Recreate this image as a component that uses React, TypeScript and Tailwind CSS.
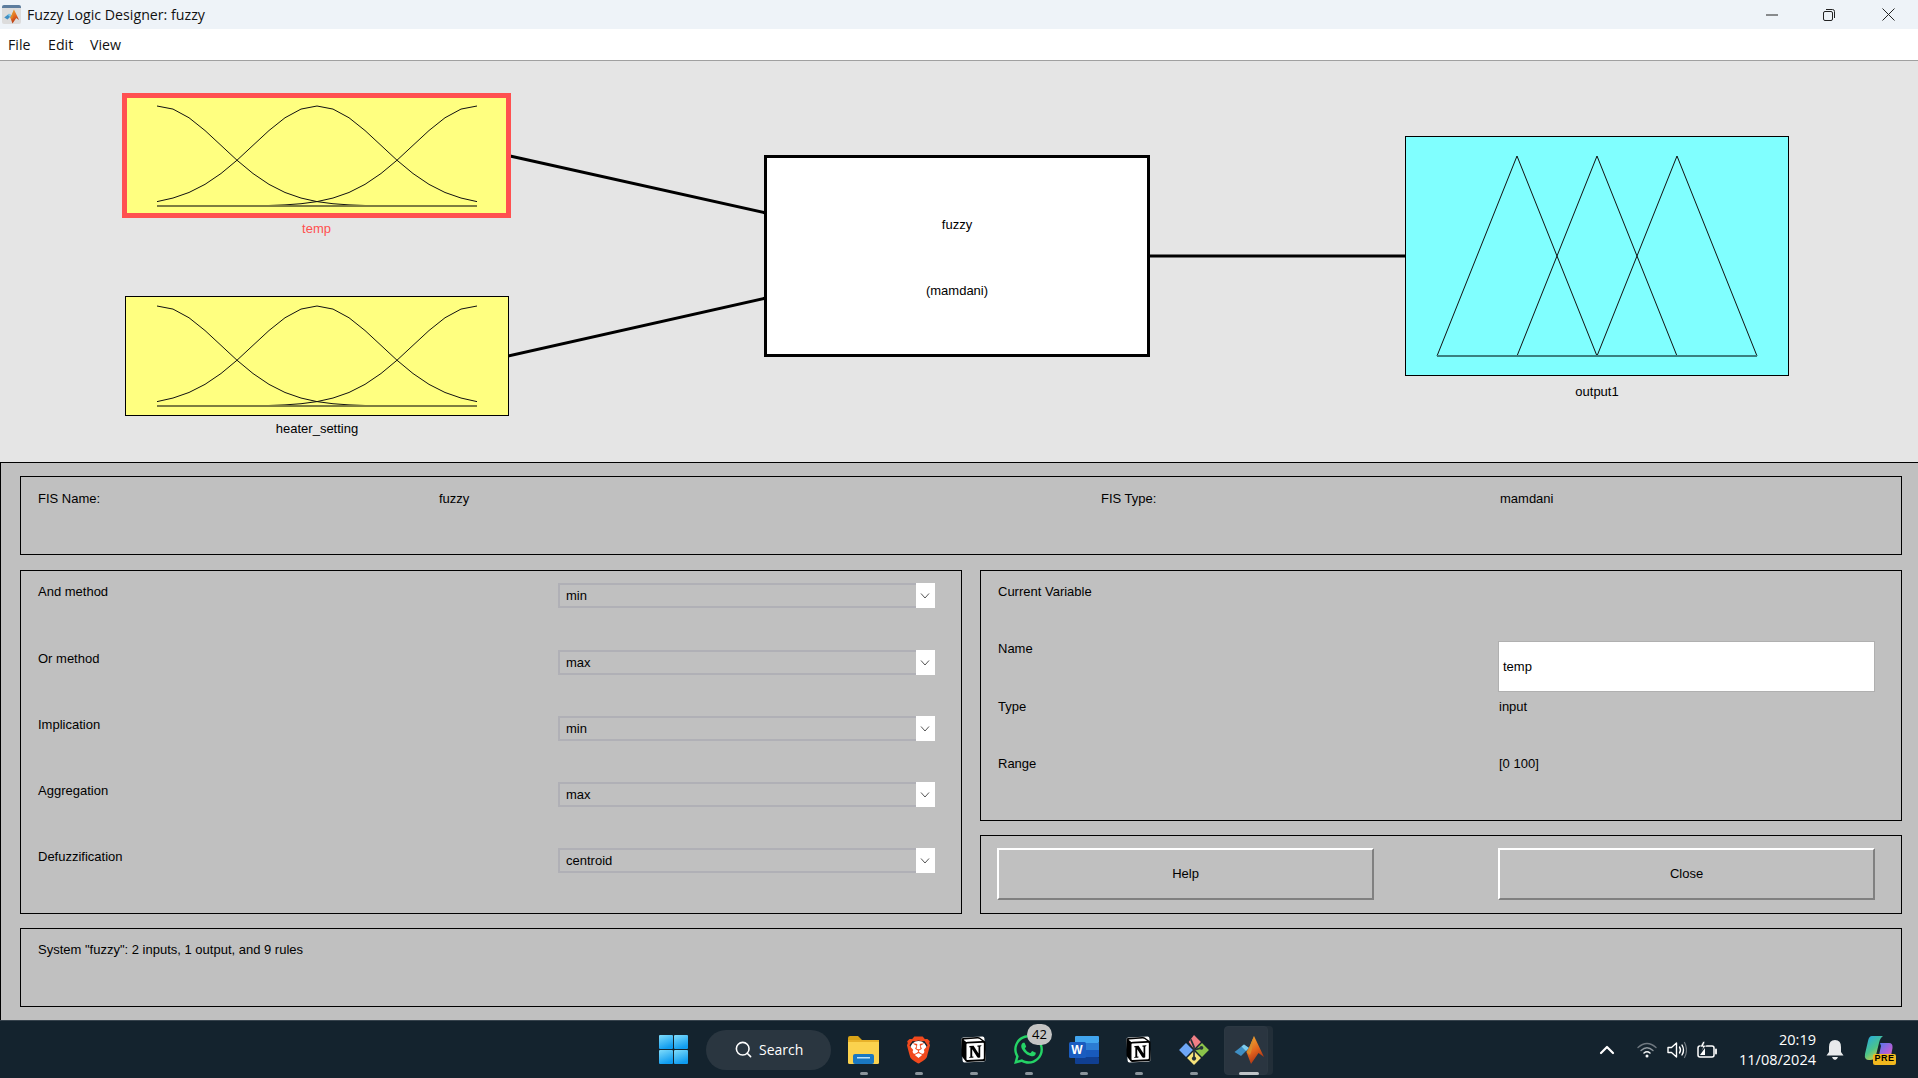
import { ChevronUp, Search } from "lucide-react";
import { FaWhatsapp } from "react-icons/fa";
import { SiBrave, SiNotion } from "react-icons/si";

const labelFont = "font-['Liberation_Sans',Arial,sans-serif] text-[13px] leading-4 text-black";
const uiFont = "font-['Open_Sans','Noto_Sans',sans-serif]";

// MATLAB samples the membership functions every 5 units, so the curves show their corners
function gaussPoints(center: number) {
  const pts: string[] = [];
  for (let x = 0; x <= 100; x += 5) {
    const y = Math.exp(-((x - center) ** 2) / (2 * 20 * 20));
    pts.push(`${x * 3.2},${(100 - y * 100).toFixed(2)}`);
  }
  return pts.join(" ");
}

function GaussPlot() {
  return (
    <svg width="322" height="103" viewBox="-1 -1 322 103" fill="none">
      {[0, 50, 100].map((c) => (
        <polyline key={c} points={gaussPoints(c)} stroke="#111" strokeWidth="1" />
      ))}
      <line x1="0" y1="100" x2="320" y2="100" stroke="#7d7d40" strokeWidth="2" />
    </svg>
  );
}

function TrianglePlot() {
  return (
    <svg width="322" height="203" viewBox="-1 -1 322 203" fill="none">
      <polyline points="0,200 80,0 160,200" stroke="#111" strokeWidth="1" />
      <polyline points="80,200 160,0 240,200" stroke="#111" strokeWidth="1" />
      <polyline points="160,200 240,0 320,200" stroke="#111" strokeWidth="1" />
      <line x1="0" y1="200" x2="320" y2="200" stroke="#3a8080" strokeWidth="2" />
    </svg>
  );
}

function Box({ className, children }: { className: string; children: React.ReactNode }) {
  return <div className={`border border-black ${className}`}>{children}</div>;
}

function Dropdown({ label, value, className = "" }: { label: string; value: string; className?: string }) {
  return (
    <div className={`flex h-[25px] items-start justify-between ${className}`}>
      <span className={`${labelFont} mt-[1px]`}>{label}</span>
      <div className="flex h-[25px] w-[377px] items-center border-2 border-r-0 border-[#b0b0b6] pl-[6px]">
        <span className={`${labelFont} flex-1`}>{value}</span>
        <div className="flex h-[25px] w-[19px] items-center justify-center bg-white pr-[2px]">
          <svg width="10" height="6" viewBox="0 0 10 6" fill="none">
            <path d="M1 0.5 L5 5 L9 0.5" stroke="#555" strokeWidth="1" />
          </svg>
        </div>
      </div>
    </div>
  );
}

function PushButton({ label }: { label: string }) {
  return (
    <div
      className={`${labelFont} flex h-[52px] w-[377px] items-center justify-center border-2 border-t-white border-l-white border-r-[#808080] border-b-[#808080]`}
    >
      {label}
    </div>
  );
}

function MatlabLogo({ size, id }: { size: number; id: string }) {
  return (
    <svg width={size} height={size} viewBox="0 0 30 30">
      <defs>
        <linearGradient id={id} x1="0.3" y1="0" x2="0.7" y2="1">
          <stop offset="0" stopColor="#f2a733" />
          <stop offset="0.5" stopColor="#e2641d" />
          <stop offset="1" stopColor="#9e2612" />
        </linearGradient>
      </defs>
      <polygon points="0.5,17 10,9.5 15,13 7,21" fill="#3f8fc4" />
      <polygon points="7.5,11.5 10,9.5 15,13 12,16" fill="#7fcbec" />
      <polygon points="15,13 20,1 30,22 24.5,18 17,29 12.5,17" fill={`url(#${id})`} />
      <polygon points="15,13 20,1 18,14 16,20 12.5,17" fill="#d88a2c" />
    </svg>
  );
}

function FolderIcon() {
  return (
    <svg width="31" height="28" viewBox="0 0 31 28">
      <path d="M0 2 Q0 0 2 0 H10 L14 4 H0 Z" fill="#d9a418" />
      <rect x="0" y="4" width="31" height="24" rx="1.5" fill="#fbd24e" />
      <rect x="0" y="4" width="31" height="2" fill="#e8b22a" />
      <rect x="5" y="18" width="21" height="10" rx="2" fill="#1a78c2" />
      <rect x="9" y="21" width="13" height="1.5" fill="#bfe3f8" />
    </svg>
  );
}

function WordIcon() {
  return (
    <div className="relative h-[28px] w-[30px]">
      <svg width="30" height="28" viewBox="0 0 30 28" className="absolute inset-0">
        <rect x="6" y="0" width="24" height="7" rx="1" fill="#41a5ee" />
        <rect x="6" y="7" width="24" height="7" fill="#2b7cd3" />
        <rect x="6" y="14" width="24" height="7" fill="#185abd" />
        <rect x="6" y="21" width="24" height="7" rx="1" fill="#103f91" />
        <rect x="0" y="6" width="17" height="16" rx="1.5" fill="#1a5cc0" />
      </svg>
      <span className="absolute left-0 top-[6px] flex h-[16px] w-[17px] items-center justify-center font-['Liberation_Sans',sans-serif] text-[12px] font-bold text-white">
        W
      </span>
    </div>
  );
}

function NotionIcon() {
  return (
    <div className="relative flex h-[27px] w-[25px] items-center justify-center">
      <div className="absolute inset-[1px] rotate-[-3deg] rounded-[2px] bg-white" />
      <SiNotion className="relative text-black" size={27} />
    </div>
  );
}

function BraveIcon() {
  return (
    <div className="relative flex h-[30px] w-[27px] items-center justify-center">
      <div className="absolute left-[5px] top-[6px] h-[17px] w-[17px] rounded-full bg-white" />
      <SiBrave size={30} className="relative text-[#f1491d]" />
    </div>
  );
}

function GitIcon() {
  return (
    <svg width="32" height="32" viewBox="0 0 30 30">
      <polygon points="15,1 21.5,7.5 15,14 10,7.5" fill="#f07f85" />
      <polygon points="22.5,8.5 29,15 22.5,21.5 16,15" fill="#8bc34a" />
      <polygon points="15,16 21.5,22.5 15,29 8.5,22.5" fill="#f6e27a" />
      <polygon points="7.5,8.5 14,15 7.5,21.5 1,15" fill="#6ea6f6" />
      <path d="M12 5 L15 12 V23 M15 15 L22 13" stroke="#26323a" strokeWidth="1.6" fill="none" />
      <circle cx="15" cy="23" r="2" fill="#26323a" />
      <circle cx="22" cy="13" r="1.8" fill="#26323a" />
    </svg>
  );
}

function CopilotIcon() {
  return (
    <div className="relative h-[30px] w-[32px]">
      <svg width="30" height="26" viewBox="0 0 30 26" className="absolute left-0 top-0">
        <defs>
          <linearGradient id="coA" x1="0" y1="0" x2="0.6" y2="1">
            <stop offset="0" stopColor="#23a8e8" />
            <stop offset="0.6" stopColor="#4cc38a" />
            <stop offset="1" stopColor="#d8d040" />
          </linearGradient>
          <linearGradient id="coB" x1="0" y1="0" x2="1" y2="1">
            <stop offset="0" stopColor="#3f7cf0" />
            <stop offset="0.6" stopColor="#b060d8" />
            <stop offset="1" stopColor="#f080a8" />
          </linearGradient>
        </defs>
        <path d="M8 1 H19 Q16 3 15 8 L12 20 Q11 25 6 25 H5 Q0 25 1 19 L4 6 Q5 1 8 1 Z" fill="url(#coA)" />
        <path d="M16 8 H25 Q29 8 28.5 13 L27 21 Q26 25 22 25 H12 Q14 23 15 20 L17 11 Z" fill="url(#coB)" />
      </svg>
      <span className="absolute bottom-0 right-0 flex h-[11px] w-[23px] items-center justify-center rounded-[2px] bg-[#f2b81e] font-['Liberation_Sans',sans-serif] text-[9px] font-bold tracking-[0.5px] text-black">
        PRE
      </span>
    </div>
  );
}

function WifiIcon() {
  return (
    <svg width="20" height="16" viewBox="0 0 20 16" fill="none" strokeLinecap="round">
      <path d="M1 5.5 Q10 -2.5 19 5.5" stroke="#6f7880" strokeWidth="1.3" />
      <path d="M4 8.5 Q10 3 16 8.5" stroke="#8f979e" strokeWidth="1.3" />
      <path d="M7 11 Q10 8.5 13 11" stroke="#f2f4f5" strokeWidth="1.5" />
      <circle cx="10" cy="14" r="1.5" fill="#f2f4f5" />
    </svg>
  );
}

function VolumeIcon() {
  return (
    <svg width="20" height="18" viewBox="0 0 20 18" fill="none" strokeLinecap="round" strokeLinejoin="round">
      <path d="M1 6.5 H4.5 L9.5 2 V16 L4.5 11.5 H1 Z" stroke="#fff" strokeWidth="1.4" />
      <path d="M12.5 6 Q14.5 9 12.5 12" stroke="#fff" strokeWidth="1.4" />
      <path d="M15 4 Q18 9 15 14" stroke="#fff" strokeWidth="1.4" />
      <path d="M17.5 1.5 Q21.5 9 17.5 16.5" stroke="#70787f" strokeWidth="1.2" />
    </svg>
  );
}

function BatteryIcon() {
  return (
    <svg width="21" height="18" viewBox="0 0 21 18" fill="none">
      <rect x="1" y="5" width="16" height="11" rx="2" stroke="#fff" strokeWidth="1.5" />
      <path d="M3 14 L8 7 V14 Z" fill="#fff" />
      <path d="M19 8.5 V12.5" stroke="#fff" strokeWidth="1.8" strokeLinecap="round" />
      <path d="M6 0.5 L3 6 H6 L4.5 10 L9 4.5 H6.5 L8 0.5 Z" fill="#fff" stroke="#14232e" strokeWidth="0.6" />
    </svg>
  );
}

function TaskIcon({ children, active }: { children: React.ReactNode; active?: boolean }) {
  return (
    <div className="relative flex h-full w-[55px] items-center justify-center">
      {active && (
        <>
          <div className="absolute left-[27px] top-[5px] h-[49px] w-[25px] rounded-[4px] bg-[#222e38]" />
          <div className="absolute left-[3px] top-[5px] h-[49px] w-[44px] rounded-[4px] border border-[#2c3842] bg-[#2a3540]" />
        </>
      )}
      <div className="relative flex items-center justify-center">{children}</div>
      <div
        className={`absolute bottom-[3px] left-1/2 h-[3px] -translate-x-1/2 rounded-full ${
          active ? "w-[20px] bg-[#c0c4c8]" : "w-[8px] bg-[#8b949b]"
        }`}
      />
    </div>
  );
}

export default function App() {
  return (
    <div className="flex h-screen w-full flex-col overflow-hidden bg-[#c0c0c0]">
      {/* Title bar */}
      <div className="flex h-[29px] items-center bg-[#eef3f8]">
        <div className="ml-[2px] flex h-[19px] w-[19px] items-center justify-center rounded-[2px] border-t-[3px] border-[#5d7d9e] bg-[#dcdcdc]">
          <MatlabLogo size={15} id="mlTitle" />
        </div>
        <span className={`${uiFont} ml-[6px] text-[14.2px] text-[#111]`}>Fuzzy Logic Designer: fuzzy</span>
        <div className="ml-auto flex items-center">
          <div className="flex w-[58px] justify-center">
            <svg width="12" height="2" viewBox="0 0 12 2">
              <line x1="0" y1="1" x2="12" y2="1" stroke="#222" strokeWidth="1" />
            </svg>
          </div>
          <div className="flex w-[58px] justify-center pr-[2px]">
            <svg width="12" height="12" viewBox="0 0 12 12" fill="none" stroke="#222" strokeWidth="1">
              <rect x="0.5" y="2.5" width="9" height="9" rx="1.5" />
              <path d="M3 0.5 H9.5 Q11.5 0.5 11.5 2.5 V9" />
            </svg>
          </div>
          <div className="flex w-[59px] justify-center pr-[1px]">
            <svg width="13" height="13" viewBox="0 0 13 13" stroke="#222" strokeWidth="1">
              <path d="M0.5 0.5 L12.5 12.5 M12.5 0.5 L0.5 12.5" />
            </svg>
          </div>
        </div>
      </div>

      {/* Menu bar */}
      <div className={`${uiFont} flex h-[32px] items-center border-b border-[#a0a0a0] bg-white pl-[8px] text-[14.2px] text-[#111]`}>
        <span className="w-[40px]">File</span>
        <span className="w-[42px]">Edit</span>
        <span>View</span>
      </div>

      {/* Diagram canvas */}
      <div className="relative h-[401px] shrink-0 bg-[#e5e5e5]">
        <svg className="absolute inset-0" width="1918" height="401" fill="none" stroke="#000" strokeWidth="3">
          <line x1="510" y1="95" x2="766" y2="152" />
          <line x1="508" y1="295" x2="766" y2="237" />
          <line x1="1149" y1="195" x2="1406" y2="195" />
        </svg>

        <div className="absolute left-[122px] top-[32px] flex h-[125px] w-[389px] items-center justify-center border-[5px] border-[#ff5050] bg-[#ffff80] pt-[2px]">
          <GaussPlot />
        </div>
        <div className={`absolute left-[122px] top-[160px] w-[389px] text-center ${labelFont} !text-[#ff5050]`}>temp</div>

        <div className="absolute left-[125px] top-[235px] flex h-[120px] w-[384px] items-center justify-center border border-black bg-[#ffff80]">
          <GaussPlot />
        </div>
        <div className={`absolute left-[125px] top-[360px] w-[384px] text-center ${labelFont}`}>heater_setting</div>

        <div className="absolute left-[764px] top-[94px] flex h-[202px] w-[386px] flex-col items-center border-[3px] border-black bg-white pt-[59px]">
          <span className={labelFont}>fuzzy</span>
          <span className={`${labelFont} mt-[50px]`}>(mamdani)</span>
        </div>

        <div className="absolute left-[1405px] top-[75px] flex h-[240px] w-[384px] items-center justify-center border border-black bg-[#80ffff]">
          <TrianglePlot />
        </div>
        <div className={`absolute left-[1405px] top-[323px] w-[384px] text-center ${labelFont}`}>output1</div>
      </div>

      {/* Control panel */}
      <div className="flex flex-1 flex-col border-l border-t border-black pl-[19px] pr-[16px] pt-[13px]">
        <Box className="flex h-[79px] pl-[17px] pt-[14px]">
          <span className={`${labelFont} w-[401px]`}>FIS Name:</span>
          <span className={`${labelFont} w-[662px]`}>fuzzy</span>
          <span className={`${labelFont} w-[399px]`}>FIS Type:</span>
          <span className={labelFont}>mamdani</span>
        </Box>

        <div className="mt-[15px] flex h-[344px] gap-[18px]">
          <Box className="flex w-[942px] flex-col gap-[41px] pl-[17px] pr-[26px] pt-[12px]">
            <Dropdown label="And method" value="min" className="mb-[1px]" />
            <Dropdown label="Or method" value="max" />
            <Dropdown label="Implication" value="min" />
            <Dropdown label="Aggregation" value="max" />
            <Dropdown label="Defuzzification" value="centroid" />
          </Box>

          <div className="flex flex-1 flex-col gap-[14px]">
            <Box className="h-[251px] pl-[17px] pt-[13px]">
              <div className={labelFont}>Current Variable</div>
              <div className="mt-[41px] flex h-[51px] items-start">
                <span className={`${labelFont} w-[500px]`}>Name</span>
                <div className={`${labelFont} flex h-[51px] w-[377px] items-center border border-[#b0b0b0] bg-white pl-[4px]`}>
                  temp
                </div>
              </div>
              <div className="mt-[7px] flex">
                <span className={`${labelFont} w-[501px]`}>Type</span>
                <span className={labelFont}>input</span>
              </div>
              <div className="mt-[41px] flex">
                <span className={`${labelFont} w-[501px]`}>Range</span>
                <span className={labelFont}>[0 100]</span>
              </div>
            </Box>
            <Box className="flex h-[79px] gap-[124px] pl-[16px] pt-[12px]">
              <PushButton label="Help" />
              <PushButton label="Close" />
            </Box>
          </div>
        </div>

        <Box className="mt-[14px] h-[79px] pl-[17px] pt-[13px]">
          <div className={labelFont}>System "fuzzy": 2 inputs, 1 output, and 9 rules</div>
        </Box>
      </div>

      {/* Windows taskbar */}
      <div className="flex h-[58px] shrink-0 items-center border-t border-[#37434d] bg-[#14232e] pl-[659px] text-white">
        <svg width="29" height="29" viewBox="0 0 29 29" className="shrink-0">
          <defs>
            <linearGradient id="win" x1="0" y1="0" x2="0.4" y2="1">
              <stop offset="0" stopColor="#7fdcfb" />
              <stop offset="1" stopColor="#0f9cf0" />
            </linearGradient>
          </defs>
          <rect x="0" y="0" width="14" height="14" rx="1" fill="url(#win)" />
          <rect x="15" y="0" width="14" height="14" rx="1" fill="url(#win)" />
          <rect x="0" y="15" width="14" height="14" rx="1" fill="url(#win)" />
          <rect x="15" y="15" width="14" height="14" rx="1" fill="url(#win)" />
        </svg>
        <div className="ml-[18px] flex h-[40px] w-[125px] shrink-0 items-center rounded-full bg-[#2a3640] pl-[28px]">
          <Search size={19} strokeWidth={2} className="text-white" />
          <span className={`${uiFont} ml-[6px] text-[14px]`}>Search</span>
        </div>

        <div className="ml-[5px] flex h-full">
          <TaskIcon><FolderIcon /></TaskIcon>
          <TaskIcon><BraveIcon /></TaskIcon>
          <TaskIcon><NotionIcon /></TaskIcon>
          <TaskIcon>
            <FaWhatsapp size={33} className="text-[#25d366]" />
            <span className="absolute left-[15px] top-[-9px] flex h-[21px] w-[25px] items-center justify-center rounded-full bg-[#c4c4c4] font-['Open_Sans',sans-serif] text-[13px] text-black">
              42
            </span>
          </TaskIcon>
          <TaskIcon><WordIcon /></TaskIcon>
          <TaskIcon><NotionIcon /></TaskIcon>
          <TaskIcon><GitIcon /></TaskIcon>
          <TaskIcon active><MatlabLogo size={30} id="mlTask" /></TaskIcon>
        </div>

        {/* System tray */}
        <div className="ml-auto flex items-center pr-[22px]">
          <ChevronUp size={24} strokeWidth={2.2} className="text-white" />
          <div className="ml-[18px]"><WifiIcon /></div>
          <div className="ml-[10px]"><VolumeIcon /></div>
          <div className="ml-[10px]"><BatteryIcon /></div>
          <div className={`${uiFont} ml-[18px] w-[80px] whitespace-nowrap text-right text-[14.5px] leading-[20px]`}>
            <div>20:19</div>
            <div>11/08/2024</div>
          </div>
          <svg width="18" height="20" viewBox="0 0 18 20" className="ml-[10px]" fill="#e8eaec">
            <path d="M9 0 Q15 0 15 7 V12 L17.5 15.5 H0.5 L3 12 V7 Q3 0 9 0 Z" />
            <path d="M6 17 H12 Q11 20 9 20 Q7 20 6 17 Z" />
          </svg>
          <div className="ml-[20px]"><CopilotIcon /></div>
        </div>
      </div>
    </div>
  );
}
